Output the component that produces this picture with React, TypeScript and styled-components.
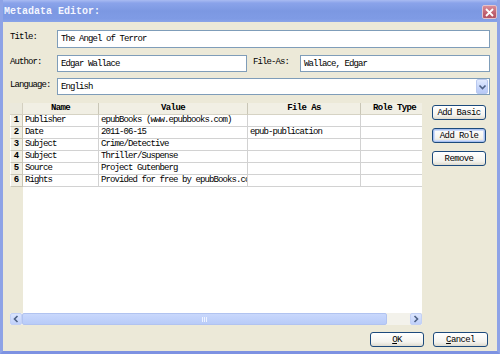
import React from "react";
import styled, { createGlobalStyle, css } from "styled-components";

const GlobalStyle = createGlobalStyle`
  html, body {
    margin: 0;
    padding: 0;
    background: #ffffff;
  }
  * {
    box-sizing: border-box;
  }
`;

const mono = css`
  font-family: "Liberation Mono", "DejaVu Sans Mono", monospace;
  font-size: 9px;
  letter-spacing: -0.9px;
  color: #000;
`;

const Window = styled.div`
  width: 500px;
  height: 354px;
  display: flex;
  flex-direction: column;
  background: #ece9d8;
  border-left: 3px solid #8ea3e6;
  border-right: 3px solid #8ea3e6;
  border-bottom: 3px solid #7d92e2;
  overflow: hidden;
`;

const TitleBar = styled.div`
  height: 22px;
  margin: 0 -3px;
  padding: 0 3px 0 4px;
  display: flex;
  align-items: center;
  justify-content: space-between;
  background: linear-gradient(
    to bottom,
    #a9bbf2 0px,
    #8aa3ea 3px,
    #7c98e2 11px,
    #7f9be5 19px,
    #8aa4e8 22px
  );
`;

const TitleText = styled.span`
  font-family: "Liberation Mono", "DejaVu Sans Mono", monospace;
  font-size: 10px;
  font-weight: bold;
  color: #f4f6ff;
  letter-spacing: 0;
  margin-top: 1px;
`;

const CloseButton = styled.div`
  width: 15px;
  height: 14px;
  margin-top: 2px;
  border: 1px solid #e3c3cb;
  border-radius: 2px;
  background: linear-gradient(to bottom, #d98d98, #c0606f 60%, #b45565);
  display: flex;
  align-items: center;
  justify-content: center;
`;

const Body = styled.div`
  flex: 1;
  display: flex;
  flex-direction: column;
  padding: 8px 7px 0 7px;
`;

const FormRow = styled.div<{ $gap: number }>`
  display: flex;
  align-items: center;
  margin-bottom: ${(p) => p.$gap}px;
`;

const Label = styled.div<{ $width: number; $lead?: number }>`
  ${mono};
  width: ${(p) => p.$width}px;
  padding-left: ${(p) => p.$lead ?? 0}px;
  flex-shrink: 0;
  align-self: flex-start;
  padding-top: 2px;
`;

const TextInput = styled.div<{ $width?: number; $height: number }>`
  ${mono};
  ${(p) => (p.$width ? `width: ${p.$width}px;` : "flex: 1;")}
  height: ${(p) => p.$height}px;
  background: #fff;
  border: 1px solid #7f9db9;
  padding: 0 3px;
  display: flex;
  align-items: center;
  white-space: nowrap;
  overflow: hidden;
`;

const Combo = styled(TextInput)`
  padding-right: 1px;
  justify-content: space-between;
`;

const ComboButton = styled.div`
  width: 12px;
  height: 15px;
  border: 1px solid #b9c9ef;
  border-radius: 2px;
  background: linear-gradient(to bottom, #e1eafe, #c4d4fa 60%, #b7c9f6);
  display: flex;
  align-items: center;
  justify-content: center;
`;

const Middle = styled.div`
  display: flex;
  gap: 10px;
  margin-top: 8px;
`;

const Grid = styled.div`
  width: 412px;
  height: 222px;
  display: flex;
  flex-direction: column;
`;

const GridMain = styled.div`
  flex: 1;
  display: flex;
  overflow: hidden;
`;

const RowHeaderCol = styled.div`
  width: 13px;
  flex-shrink: 0;
  display: flex;
  flex-direction: column;
`;

const Corner = styled.div`
  height: 12px;
  border-right: 1px solid #d4d0c0;
  border-bottom: 1px solid #d4d0c0;
  background: #ebe9dc;
`;

const RowNumber = styled.div`
  ${mono};
  font-weight: bold;
  letter-spacing: 0;
  height: 12px;
  line-height: 11px;
  text-align: center;
  background: #f1efe4;
  border-right: 1px solid #c9c6b6;
  border-bottom: 1px solid #c9c6b6;
  border-left: 1px solid #ffffff;
`;

const Viewport = styled.div`
  flex: 1;
  display: flex;
  flex-direction: column;
  overflow: hidden;
`;

const HeaderRow = styled.div`
  display: flex;
  height: 12px;
  flex-shrink: 0;
  background: #ece9d8;
`;

const HeaderCell = styled.div<{ $w: number }>`
  ${mono};
  font-weight: bold;
  letter-spacing: -0.6px;
  width: ${(p) => p.$w}px;
  flex-shrink: 0;
  line-height: 11px;
  text-align: center;
  background: #f1efe4;
  border-right: 1px solid #c9c6b6;
  border-bottom: 1px solid #d6d3c4;
  white-space: nowrap;
  overflow: hidden;
`;

const Rows = styled.div`
  flex: 1;
  background: #fff;
`;

const DataRow = styled.div`
  display: flex;
  height: 12px;
`;

const Cell = styled.div<{ $w: number }>`
  ${mono};
  width: ${(p) => p.$w}px;
  flex-shrink: 0;
  line-height: 11px;
  padding-left: 2px;
  border-right: 1px solid #d2d2d2;
  border-bottom: 1px solid #d2d2d2;
  white-space: nowrap;
  overflow: hidden;
`;

const HScroll = styled.div`
  height: 12px;
  display: flex;
  background: #f3f2eb;
`;

const ArrowButton = styled.div`
  width: 12px;
  height: 12px;
  flex-shrink: 0;
  border: 1px solid #c3d1f5;
  border-radius: 2px;
  background: linear-gradient(to bottom, #dbe5fe, #c1d1fa);
  display: flex;
  align-items: center;
  justify-content: center;
`;

const Thumb = styled.div<{ $w: number }>`
  width: ${(p) => p.$w}px;
  height: 12px;
  border: 1px solid #b1c3f0;
  border-radius: 2px;
  background: linear-gradient(to bottom, #c9d8fc, #b8cbf8);
  display: flex;
  align-items: center;
  justify-content: center;
`;

const Track = styled.div`
  flex: 1;
`;

const SideButtons = styled.div`
  display: flex;
  flex-direction: column;
  gap: 8px;
  padding-top: 2px;
`;

const XPButton = styled.div<{ $focused?: boolean; $w: number }>`
  ${mono};
  letter-spacing: -0.6px;
  width: ${(p) => p.$w}px;
  height: 15px;
  border: 1px solid #1c4a7c;
  border-radius: 3px;
  background: linear-gradient(to bottom, #ffffff, #f4f3ee 70%, #dedbcf);
  display: flex;
  align-items: center;
  justify-content: center;
  box-shadow: ${(p) =>
    p.$focused ? "inset 0 0 0 1px #a8c0f0, inset 0 0 0 2px #cfdcf8" : "none"};
`;

const Footer = styled.div`
  display: flex;
  justify-content: flex-end;
  gap: 9px;
  margin-top: 7px;
  padding-right: 2px;
`;

const columns = [76, 149, 113, 68];

const rows = [
  ["Publisher", "epubBooks (www.epubbooks.com)", "", ""],
  ["Date", "2011-06-15", "epub-publication", ""],
  ["Subject", "Crime/Detective", "", ""],
  ["Subject", "Thriller/Suspense", "", ""],
  ["Source", "Project Gutenberg", "", ""],
  ["Rights", "Provided for free by epubBooks.com", "", ""],
];

const Chevron: React.FC<{ dir: "left" | "right" | "down" }> = ({ dir }) => {
  const d =
    dir === "down"
      ? "M1.5 2.5 L4.5 5.5 L7.5 2.5"
      : dir === "left"
      ? "M5.5 1 L2.5 4 L5.5 7"
      : "M2.5 1 L5.5 4 L2.5 7";
  const size = dir === "down" ? [9, 8] : [8, 8];
  return (
    <svg width={size[0]} height={size[1]} viewBox={`0 0 ${size[0]} ${size[1]}`}>
      <path d={d} fill="none" stroke="#4d6185" strokeWidth="1.6" />
    </svg>
  );
};

export default function App() {
  return (
    <>
      <GlobalStyle />
      <Window>
        <TitleBar>
          <TitleText>Metadata Editor:</TitleText>
          <CloseButton>
            <svg width="9" height="9" viewBox="0 0 9 9">
              <path d="M1 1 L8 8 M8 1 L1 8" stroke="#fff" strokeWidth="1.8" />
            </svg>
          </CloseButton>
        </TitleBar>
        <Body>
          <FormRow $gap={7}>
            <Label $width={47}>Title:</Label>
            <TextInput $height={18}>The Angel of Terror</TextInput>
          </FormRow>
          <FormRow $gap={6}>
            <Label $width={47}>Author:</Label>
            <TextInput $width={190} $height={17}>
              Edgar Wallace
            </TextInput>
            <Label $width={53} $lead={6}>
              File-As:
            </Label>
            <TextInput $height={17}>Wallace, Edgar</TextInput>
          </FormRow>
          <FormRow $gap={0}>
            <Label $width={47}>Language:</Label>
            <Combo $height={17}>
              <span>English</span>
              <ComboButton>
                <Chevron dir="down" />
              </ComboButton>
            </Combo>
          </FormRow>
          <Middle>
            <Grid>
              <GridMain>
                <RowHeaderCol>
                  <Corner />
                  {rows.map((_, i) => (
                    <RowNumber key={i}>{i + 1}</RowNumber>
                  ))}
                </RowHeaderCol>
                <Viewport>
                  <HeaderRow>
                    {["Name", "Value", "File As", "Role Type"].map((h, i) => (
                      <HeaderCell key={h} $w={columns[i]}>
                        {h}
                      </HeaderCell>
                    ))}
                  </HeaderRow>
                  <Rows>
                    {rows.map((r, ri) => (
                      <DataRow key={ri}>
                        {r.map((c, ci) => (
                          <Cell key={ci} $w={columns[ci]}>
                            {c}
                          </Cell>
                        ))}
                      </DataRow>
                    ))}
                  </Rows>
                </Viewport>
              </GridMain>
              <HScroll>
                <ArrowButton>
                  <Chevron dir="left" />
                </ArrowButton>
                <Thumb $w={365}>
                  <svg width="6" height="5" viewBox="0 0 6 5">
                    <path d="M0.5 0 V5 M2.5 0 V5 M4.5 0 V5" stroke="#eef3ff" />
                  </svg>
                </Thumb>
                <Track />
                <ArrowButton>
                  <Chevron dir="right" />
                </ArrowButton>
              </HScroll>
            </Grid>
            <SideButtons>
              <XPButton $w={54}>Add Basic</XPButton>
              <XPButton $w={54} $focused>
                Add Role
              </XPButton>
              <XPButton $w={54}>Remove</XPButton>
            </SideButtons>
          </Middle>
          <Footer>
            <XPButton $w={54}>
              <u>O</u>K
            </XPButton>
            <XPButton $w={55}>
              <u>C</u>ancel
            </XPButton>
          </Footer>
        </Body>
      </Window>
    </>
  );
}
